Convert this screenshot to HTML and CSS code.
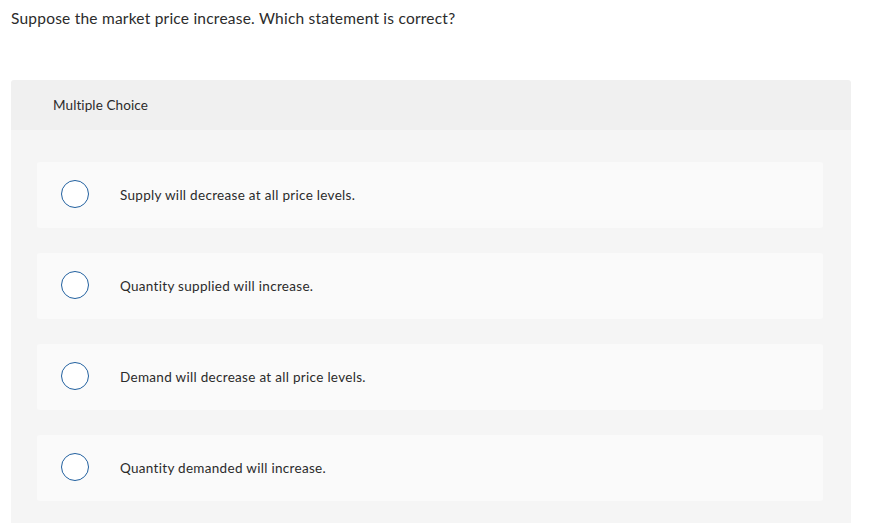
FILE: index.html
```html
<!DOCTYPE html>
<html>
<head>
<meta charset="utf-8">
<link rel="stylesheet" href="styles.css">
</head>
<body>
<p class="question">Suppose the market price increase. Which statement is correct?</p>
<div class="panel">
  <div class="panel-head">Multiple Choice</div>
  <div class="panel-body">
    <div class="option"><span class="radio"></span><span class="label">Supply will decrease at all price levels.</span></div>
    <div class="option"><span class="radio"></span><span class="label">Quantity supplied will increase.</span></div>
    <div class="option"><span class="radio"></span><span class="label">Demand will decrease at all price levels.</span></div>
    <div class="option"><span class="radio"></span><span class="label">Quantity demanded will increase.</span></div>
  </div>
</div>
</body>
</html>
```
FILE: styles.css
```css
html, body { margin: 0; padding: 0; background: #fff; }
body {
  font-family: Lato, "Open Sans", sans-serif;
  color: #2b2b2b;
  padding: 0 25px 0 11px;
}
.question {
  margin: 0;
  padding-top: 9px;
  font-size: 15.5px;
  letter-spacing: 0.22px;
  line-height: 18px;
  height: 71px;
}
.panel {
  border-radius: 3px 3px 0 0;
  overflow: hidden;
  width: 840px;
}
.panel-head {
  background: #f0f0f0;
  height: 50px;
  line-height: 50px;
  padding-left: 42px;
  font-size: 13.5px;
  letter-spacing: 0.1px;
}
.panel-body {
  background: #f5f5f5;
  padding: 32px 28px 30px 26px;
  display: flex;
  flex-direction: column;
  gap: 25px;
}
.option {
  background: #fafafa;
  border-radius: 3px;
  height: 66px;
  display: flex;
  align-items: center;
  padding-left: 24px;
  font-size: 13.5px;
  letter-spacing: 0.3px;
}
.radio {
  width: 28px;
  height: 28px;
  border: 1.5px solid #21609f;
  border-radius: 50%;
  background: #fff;
  box-sizing: border-box;
  flex: none;
  margin-top: -2px;
}
.label { margin-left: 31px; }
```
